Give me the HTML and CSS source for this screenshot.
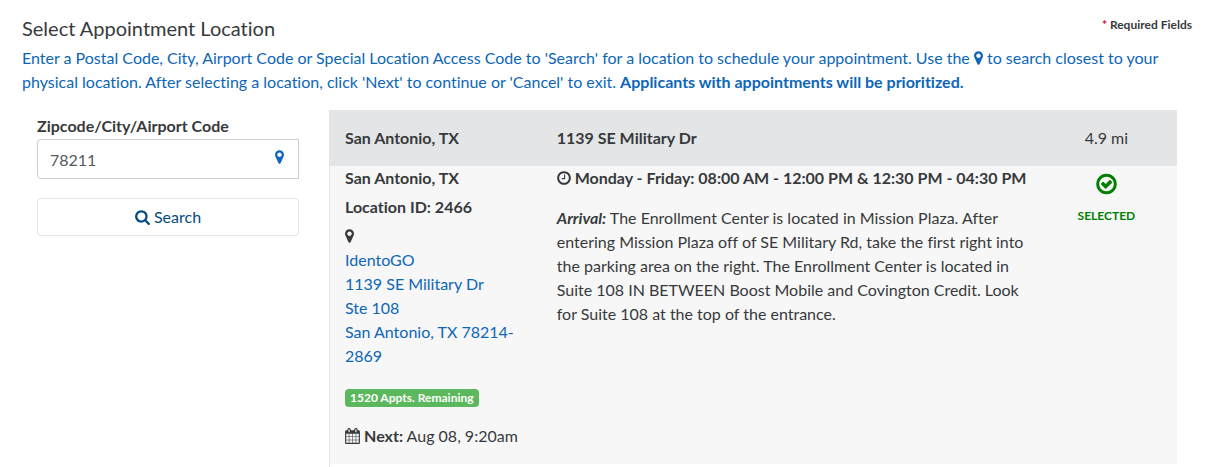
FILE: index.html
```
<!DOCTYPE html>

<html lang="en">

<head>
	<meta charset="UTF-8">
	<title>Select Appointment Location</title>
	<link rel="stylesheet" href="styles.css">
</head>

<body>

	<!-- icons -->
	<svg class="sprite" xmlns="http://www.w3.org/2000/svg">
		<symbol id="marker" viewBox="384 0 1024 1792"><path d="M1152 640q0-106-75-181t-181-75-181 75-75 181 75 181 181 75 181-75 75-181zm256 0q0 109-33 179l-364 774q-16 33-47.500 52t-67.500 19-67.500-19-46.500-52l-365-774q-33-70-33-179 0-212 150-362t362-150 362 150 150 362z"/></symbol>
		<symbol id="magnifier" viewBox="64 0 1664 1792"><path d="M1216 832q0-185-131.500-316.500t-316.500-131.500-316.500 131.500-131.500 316.500 131.500 316.500 316.500 131.500 316.500-131.500 131.500-316.500zm512 832q0 52-38 90t-90 38q-54 0-90-38l-343-342q-179 124-399 124-143 0-273.500-55.500t-225-150-150-225-55.500-273.500 55.500-273.500 150-225 225-150 273.500-55.500 273.500 55.500 225 150 150 225 55.500 273.500q0 220-124 399l343 343q37 37 37 90z"/></symbol>
		<symbol id="clock" viewBox="128 0 1536 1792"><path d="M1024 544v448q0 14-9 23t-23 9h-320q-14 0-23-9t-9-23v-64q0-14 9-23t23-9h224v-352q0-14 9-23t23-9h64q14 0 23 9t9 23zm416 352q0-148-73-273t-198-198-273-73-273 73-198 198-73 273 73 273 198 198 273 73 273-73 198-198 73-273zm224 0q0 209-103 385.500t-279.500 279.500-385.500 103-385.500-103-279.500-279.500-103-385.500 103-385.500 279.500-279.500 385.500-103 385.500 103 279.500 279.500 103 385.500z"/></symbol>
		<symbol id="check" viewBox="128 0 1536 1792"><path d="M1299 813l-422 422q-19 19-45 19t-45-19l-294-294q-19-19-19-45t19-45l102-102q19-19 45-19t45 19l147 147 275-275q19-19 45-19t45 19l102 102q19 19 19 45t-19 45zm141 83q0-148-73-273t-198-198-273-73-273 73-198 198-73 273 73 273 198 198 273 73 273-73 198-198 73-273zm224 0q0 209-103 385.500t-279.500 279.500-385.500 103-385.500-103-279.500-279.500-103-385.500 103-385.500 279.500-279.500 385.500-103 385.500 103 279.500 279.500 103 385.500z"/></symbol>
		<symbol id="calendar" viewBox="64 0 1664 1792"><path d="M192 1664h288v-288h-288v288zm352 0h320v-288h-320v288zm-352-352h288v-320h-288v320zm352 0h320v-320h-320v320zm-352-384h288v-288h-288v288zm736 736h320v-288h-320v288zm-384-736h320v-288h-320v288zm768 736h288v-288h-288v288zm-384-352h320v-320h-320v320zm-352-864v-288q0-13-9.500-22.500t-22.500-9.500h-64q-13 0-22.500 9.500t-9.500 22.500v288q0 13 9.500 22.500t22.500 9.500h64q13 0 22.500-9.500t9.500-22.500zm736 864h288v-320h-288v320zm-384-384h320v-288h-320v288zm384 0h288v-288h-288v288zm32-480v-288q0-13-9.500-22.500t-22.500-9.500h-64q-13 0-22.500 9.500t-9.500 22.500v288q0 13 9.500 22.500t22.500 9.500h64q13 0 22.500-9.500t9.500-22.500zm384-64v1280q0 52-38 90t-90 38h-1408q-52 0-90-38t-38-90v-1280q0-52 38-90t90-38h128v-96q0-66 47-113t113-47h64q66 0 113 47t47 113v96h384v-96q0-66 47-113t113-47h64q66 0 113 47t47 113v96h128q52 0 90 38t38 90z"/></symbol>
	</svg>

	<header class="page-header">
		<h1>Select Appointment Location</h1>
		<span class="required"><span class="star">*</span> Required Fields</span>
	</header>

	<p class="intro">Enter a Postal Code, City, Airport Code or Special Location Access Code to 'Search' for a location to schedule your appointment. Use the <svg class="icon icon-marker"><use href="#marker"/></svg> to search closest to your physical location. After selecting a location, click 'Next' to continue or 'Cancel' to exit. <strong>Applicants with appointments will be prioritized.</strong></p>

	<div class="row">
		<form class="search">
			<label for="location">Zipcode/City/Airport Code</label>
			<div class="search-field">
				<input type="text" id="location" name="location" value="78211" />
				<button type="button" class="locate" aria-label="Use my location"><svg class="icon icon-marker"><use href="#marker"/></svg></button>
			</div>
			<button type="button" class="search-btn"><svg class="icon icon-wide"><use href="#magnifier"/></svg> Search</button>
		</form>

		<main class="results">
			<div class="result-row result-head">
				<strong>San Antonio, TX</strong>
				<strong>1139 SE Military Dr</strong>
				<span class="distance">4.9 mi</span>
			</div>

			<div class="result-row result-body">
				<div class="place">
					<strong>San Antonio, TX</strong>
					<strong>Location ID: 2466</strong>
					<address>
						<svg class="icon icon-marker"><use href="#marker"/></svg><br/>
						<a href="#">IdentoGO<br/>1139 SE Military Dr<br/>Ste 108<br/>San Antonio, TX 78214-2869</a>
					</address>
					<span class="badge">1520 Appts. Remaining</span>
					<div class="next"><svg class="icon icon-wide"><use href="#calendar"/></svg> <strong>Next:</strong> Aug 08, 9:20am</div>
				</div>

				<div class="details">
					<strong><svg class="icon icon-clock"><use href="#clock"/></svg> Monday - Friday: 08:00 AM - 12:00 PM &amp; 12:30 PM - 04:30 PM</strong>
					<p><strong><em>Arrival:</em></strong> The Enrollment Center is located in Mission Plaza. After entering Mission Plaza off of SE Military Rd, take the first right into the parking area on the right. The Enrollment Center is located in Suite 108 IN BETWEEN Boost Mobile and Covington Credit. Look for Suite 108 at the top of the entrance.</p>
				</div>

				<div class="status">
					<svg class="icon-check"><use href="#check"/></svg>
					<span>SELECTED</span>
				</div>
			</div>
		</main>
	</div>

</body>

</html>
```

FILE: styles.css
```
*, *:after, *:before { box-sizing: border-box; }
body { margin: 0; padding: 16px 24px 0 22px; background: #fff; color: #373a3c; font-family: Lato, sans-serif; font-size: 16px; line-height: 24px; font-variant-ligatures: none; }
p { margin: 0; }
a { color: #0d66b8; text-decoration: none; }
a:hover { text-decoration: underline; }

/* icons */
.sprite { display: none; }
.icon { height: 16px; vertical-align: -2px; fill: currentColor; }
.icon-marker { width: 9px; }
.icon-clock { width: 14px; }
.icon-wide { width: 15px; }
.icon-check { width: 21px; height: 24px; fill: currentColor; }

/* header */
.page-header { display: flex; justify-content: space-between; align-items: flex-start; margin-bottom: 6px; }
.page-header h1 { margin: 0; font-size: 20px; font-weight: 400; line-height: 24px; }
.required { font-size: 12px; font-weight: 700; line-height: 18px; }
.star { color: #d9003a; }
.intro { color: #0d66b8; margin-bottom: 16px; }

.row { display: grid; grid-template-columns: 292px 1fr; }

/* search */
.search { padding: 4px 15px 0; }
.search label { display: block; margin-bottom: 1px; font-weight: 700; }
.search-field { position: relative; margin-bottom: 19px; }
.search-field input { display: block; width: 100%; height: 40px; padding: 0 40px 0 12px; border: 1px solid #ccc; border-radius: 4px 0 0 4px; background: #fff; color: #55595c; font: inherit; }
.locate { position: absolute; top: 0; right: 0; height: 36px; padding: 0 15px; border: 0; background: none; color: #0d66b8; font: inherit; cursor: pointer; }
.search-btn { display: block; width: 100%; height: 38px; border: 1px solid #e4e4e4; border-radius: 4px; background: #fff; color: #044b80; font: inherit; cursor: pointer; }

/* results */
.results { margin: 0 15px; padding-bottom: 16px; border-left: 1px solid #e4e5e7; }
.result-row { display: grid; grid-template-columns: 3fr 7fr 2fr; }
.result-row > * { min-width: 0; padding: 0 15px; }
.result-row .details { padding-right: 0; }
.result-head { padding: 16px 0; background: #e4e5e7; }
.result-body { padding-bottom: 16px; background: #f7f7f7; }
.distance, .status { text-align: center; }

.place > strong { display: block; margin-bottom: 5px; }
.place address { margin-bottom: 21px; font-style: normal; }
.badge { display: table; padding: 0 5px; border-radius: 4px; background: #5cb85c; color: #fff; font-size: 12px; font-weight: 700; line-height: 18px; }
.next { margin-top: 17px; }
.details p { margin-top: 16px; }

.status { display: flex; flex-direction: column; align-items: center; gap: 8px; color: #008000; }
.result-body .status { padding-top: 6px; }
.status span { font-size: 12px; font-weight: 700; }
```
